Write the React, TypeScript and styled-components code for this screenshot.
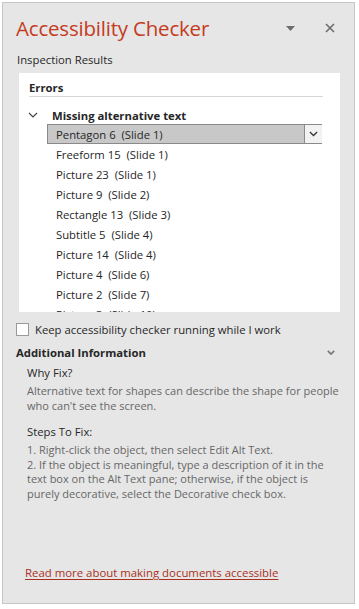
import React from 'react';
import styled, { createGlobalStyle } from 'styled-components';

const GlobalStyle = createGlobalStyle`
  html, body {
    margin: 0;
    padding: 0;
    background: #ffffff;
  }
  body {
    font-family: 'Open Sans', 'Noto Sans', sans-serif;
    font-size: 11.3px;
    color: #262626;
  }
`;

const Pane = styled.div`
  box-sizing: border-box;
  margin: 2px;
  width: 353px;
  height: 602px;
  border: 1px solid #c6c6c6;
  background: #e6e6e6;
  display: flex;
  flex-direction: column;
`;

const Header = styled.div`
  display: flex;
  align-items: center;
  height: 30px;
  margin-top: 10px;
  padding: 0 14px 0 13px;
`;

const Title = styled.h1`
  flex: 1;
  margin: 0;
  font-size: 20.5px;
  font-weight: 400;
  color: #c43b1d;
  letter-spacing: -0.2px;
`;

const IconButton = styled.button<{ $gap?: number }>`
  border: none;
  background: none;
  padding: 0;
  width: 20px;
  height: 20px;
  margin-left: ${(p) => p.$gap ?? 0}px;
  display: flex;
  align-items: center;
  justify-content: center;
`;

const SectionLabel = styled.div`
  margin: 9px 0 0 14px;
  height: 16px;
  line-height: 16px;
`;

const ResultsBox = styled.div`
  box-sizing: border-box;
  margin: 5px 0 0 16px;
  width: 321px;
  height: 239px;
  background: #ffffff;
  overflow: hidden;
`;

const BoxHeading = styled.div`
  margin: 0 17px 0 10px;
  padding-top: 6px;
  height: 17px;
  line-height: 17px;
  font-weight: 700;
  border-bottom: 1px solid #d6d6d6;
`;

const Category = styled.div`
  display: flex;
  align-items: center;
  height: 18px;
  margin-top: 9px;
  padding-left: 9px;
  font-weight: 700;
`;

const CategoryChevron = styled.span`
  width: 24px;
  display: flex;
  align-items: center;
`;

const ItemList = styled.div`
  margin: 0 18px 0 28px;
`;

const Item = styled.div<{ $selected?: boolean }>`
  box-sizing: border-box;
  display: flex;
  align-items: center;
  height: 20px;
  padding-left: 8px;
  border: 1px solid ${(p) => (p.$selected ? '#8a8a8a' : 'transparent')};
  background: ${(p) => (p.$selected ? '#c8c8c8' : 'transparent')};
`;

const ItemText = styled.span`
  flex: 1;
  white-space: pre;
`;

const ItemMenu = styled.span`
  box-sizing: border-box;
  width: 18px;
  height: 18px;
  margin-right: -1px;
  border-left: 1px solid #8a8a8a;
  background: #f2f2f2;
  display: flex;
  align-items: center;
  justify-content: center;
`;

const CheckRow = styled.label`
  display: flex;
  align-items: center;
  margin: 10px 0 0 13px;
  height: 14px;
`;

const CheckBox = styled.span`
  box-sizing: border-box;
  width: 13px;
  height: 13px;
  border: 1px solid #9a9a9a;
  background: #ffffff;
  margin-right: 6px;
`;

const InfoHeader = styled.div`
  display: flex;
  align-items: center;
  justify-content: space-between;
  margin: 7px 19px 0 13px;
  height: 18px;
  font-weight: 700;
`;

const InfoBody = styled.div`
  padding: 4px 0 0 24px;
`;

const InfoTitle = styled.div<{ $top?: number }>`
  line-height: 16px;
  color: #262626;
  margin-top: ${(p) => p.$top ?? 0}px;
`;

const InfoText = styled.div`
  margin-top: 3px;
  font-size: 11px;
  line-height: 14.5px;
  color: #666666;
  white-space: nowrap;
`;

const Footer = styled.div`
  margin-top: auto;
  padding: 0 0 23px 22px;
`;

const Link = styled.a`
  color: #a8321e;
  font-size: 11.4px;
  text-decoration: underline;
  text-underline-offset: 2px;
`;

const items = [
  'Pentagon 6  (Slide 1)',
  'Freeform 15  (Slide 1)',
  'Picture 23  (Slide 1)',
  'Picture 9  (Slide 2)',
  'Rectangle 13  (Slide 3)',
  'Subtitle 5  (Slide 4)',
  'Picture 14  (Slide 4)',
  'Picture 4  (Slide 6)',
  'Picture 2  (Slide 7)',
  'Picture 3  (Slide 10)',
];

const Chevron: React.FC<{ size?: number; color?: string; width?: number }> = ({
  size = 10,
  color = '#333',
  width = 1.2,
}) => (
  <svg width={size} height={size / 2 + 1} viewBox="0 0 10 6" fill="none">
    <path d="M1 1l4 4 4-4" stroke={color} strokeWidth={width} />
  </svg>
);

export default function App() {
  return (
    <>
      <GlobalStyle />
      <Pane>
        <Header>
          <Title>Accessibility Checker</Title>
          <IconButton aria-label="Task pane options">
            <svg width="9" height="5" viewBox="0 0 9 5">
              <path d="M0 0h9L4.5 5z" fill="#6d6d6d" />
            </svg>
          </IconButton>
          <IconButton aria-label="Close" $gap={20}>
            <svg width="10" height="10" viewBox="0 0 10 10">
              <path d="M1 1l8 8M9 1l-8 8" stroke="#6d6d6d" strokeWidth="1.6" />
            </svg>
          </IconButton>
        </Header>

        <SectionLabel>Inspection Results</SectionLabel>

        <ResultsBox>
          <BoxHeading>Errors</BoxHeading>
          <Category>
            <CategoryChevron>
              <Chevron size={10} color="#444" />
            </CategoryChevron>
            Missing alternative text
          </Category>
          <ItemList>
            {items.map((label, i) => (
              <Item key={label} $selected={i === 0}>
                <ItemText>{label}</ItemText>
                {i === 0 && (
                  <ItemMenu>
                    <Chevron size={9} color="#333" width={1.4} />
                  </ItemMenu>
                )}
              </Item>
            ))}
          </ItemList>
        </ResultsBox>

        <CheckRow>
          <CheckBox />
          Keep accessibility checker running while I work
        </CheckRow>

        <InfoHeader>
          Additional Information
          <Chevron size={8} color="#777" width={2} />
        </InfoHeader>

        <InfoBody>
          <InfoTitle>Why Fix?</InfoTitle>
          <InfoText>
            Alternative text for shapes can describe the shape for people
            <br />
            who can't see the screen.
          </InfoText>
          <InfoTitle $top={11}>Steps To Fix:</InfoTitle>
          <InfoText>
            1. Right-click the object, then select Edit Alt Text.
            <br />
            2. If the object is meaningful, type a description of it in the
            <br />
            text box on the Alt Text pane; otherwise, if the object is
            <br />
            purely decorative, select the Decorative check box.
          </InfoText>
        </InfoBody>

        <Footer>
          <Link href="#">Read more about making documents accessible</Link>
        </Footer>
      </Pane>
    </>
  );
}
